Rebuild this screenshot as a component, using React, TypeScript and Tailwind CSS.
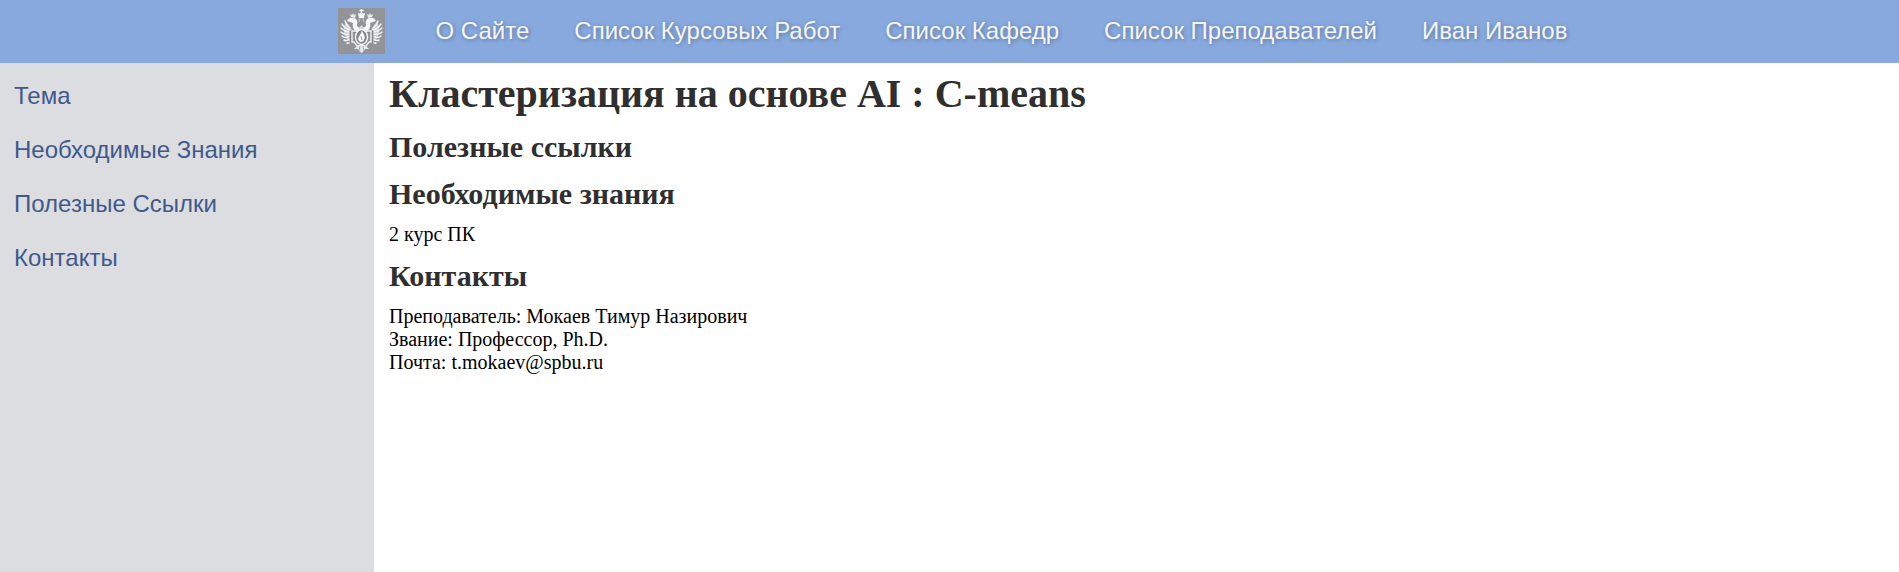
const navItems = ['О Сайте', 'Список Курсовых Работ', 'Список Кафедр', 'Список Преподавателей', 'Иван Иванов'];

const sections = [
  { id: 'topic', label: 'Тема' },
  { id: 'knowledge', label: 'Необходимые Знания' },
  { id: 'links', label: 'Полезные Ссылки' },
  { id: 'contacts', label: 'Контакты' },
];

function WingHalf() {
  return (
    <g>
      <path d="M9 13C10 10 13 9 16 10C19 11 20 14 19 17C19 19 21 20 23.500 20V24H18C15 21 14 18 15 15C13 14 11 14 9 13Z" fill="#f3f4f6" />
      <path d="M13 9L12 6L14 7L15 5L16 7L18 6L17 10Z" fill="#e8eaec" />
      <path d="M8 14C6 17 5 21 6 25C7 30 10 33 14 35L15 32L12 24L14 22L11 17Z" fill="#c9cbce" />
      <path
        d="M12 20C9 18 8 16 7 13M12 22C8 21 6 19 4 16M12 24C8 24 5 22 3 20M12 26C8 27 5 26 3 24M12 28C9 30 6 30 4 28M13 30C10 33 8 33 6 32M14 32C12 35 11 36 9 35"
        fill="none"
        stroke="#f6f7f8"
        strokeWidth="1.4"
        strokeLinecap="round"
      />
      <path d="M18 24H13V34H16L19 37H23.5" fill="none" stroke="#85878b" strokeWidth="3" />
      <path d="M19 23H14V34H16L19 38H23.5" fill="none" stroke="#f3f4f6" strokeWidth="1.4" />
    </g>
  );
}

function Crest() {
  return (
    <svg viewBox="0 0 47 46" className="h-[46px] w-[47px]" role="img" aria-label="СПбГУ">
      <rect width="47" height="46" fill="#929498" />
      <WingHalf />
      <g transform="translate(47 0) scale(-1 1)">
        <WingHalf />
      </g>
      <path d="M23.5 1V5M21.5 2.5H25.5" stroke="#fff" strokeWidth="1.3" />
      <path d="M20 5L22 5.500L23.500 4L25 5.500L27 5L26 10H21Z" fill="#f6f7f8" />
      <path d="M22 10L21 14M25 10L26 14" stroke="#c9cbce" strokeWidth="1" />
      <path d="M21 20L23.500 17L26 20V24H21Z" fill="#d8dadd" />
      <ellipse cx="23.5" cy="29" rx="6" ry="7.5" fill="#85878b" stroke="#f6f7f8" strokeWidth="1.4" />
      <path d="M24 22.500C25 26 28 28 26 32C25 34 22 35 20.500 32C19.500 29 23 27 24 22.500Z" fill="#fff" />
      <path d="M23 28L24 32" stroke="#929498" strokeWidth="1" />
      <path d="M20 37H27L31 41L27 41L26 43L23.500 45L21 43L20 41L16 41Z" fill="#e4e6e8" />
      <path d="M22 38L21 43M25 38L26 43" stroke="#9a9ca0" strokeWidth="0.8" />
    </svg>
  );
}

export default function App() {
  return (
    <div className="flex min-h-screen flex-col bg-white font-['Liberation_Serif',serif] text-xl leading-[23px] text-black">
      <header className="flex items-center justify-center gap-[51px] bg-[#87a9de] pt-2 pb-[9px] pl-[6px] font-['Liberation_Sans',sans-serif]">
        <a href="#home">
          <Crest />
        </a>
        <nav className="flex gap-[45px]">
          {navItems.map((item) => (
            <a key={item} href="#nav" className="text-2xl text-[#f5f5f5] [text-shadow:1px_1px_4px_#00000050]">
              {item}
            </a>
          ))}
        </nav>
      </header>
      <div className="flex grow">
        <aside className="w-[374px] shrink-0 bg-[#dcdde1] font-['Liberation_Sans',sans-serif]">
          <nav className="flex flex-col gap-[26px] px-[14px] py-[19px]">
            {sections.map((s) => (
              <a key={s.id} href={`#${s.id}`} className="text-2xl leading-7 text-[#40598a]">
                {s.label}
              </a>
            ))}
          </nav>
        </aside>
        <main className="flex grow flex-col gap-3 px-[15px] py-2">
          <h1 id="topic" className="text-[40px] leading-[46px] font-bold text-[#2f2f2f]">
            Кластеризация на основе AI : C-means
          </h1>
          <h2 id="links" className="text-3xl leading-[35px] font-bold text-[#2f2f2f]">Полезные ссылки</h2>
          <h2 id="knowledge" className="text-3xl leading-[35px] font-bold text-[#2f2f2f]">Необходимые знания</h2>
          <p>2 курс ПК</p>
          <h2 id="contacts" className="text-3xl leading-[35px] font-bold text-[#2f2f2f]">Контакты</h2>
          <div>
            <p>Преподаватель: Мокаев Тимур Назирович</p>
            <p>Звание: Профессор, Ph.D.</p>
            <p>Почта: t.mokaev@spbu.ru</p>
          </div>
        </main>
      </div>
    </div>
  );
}
